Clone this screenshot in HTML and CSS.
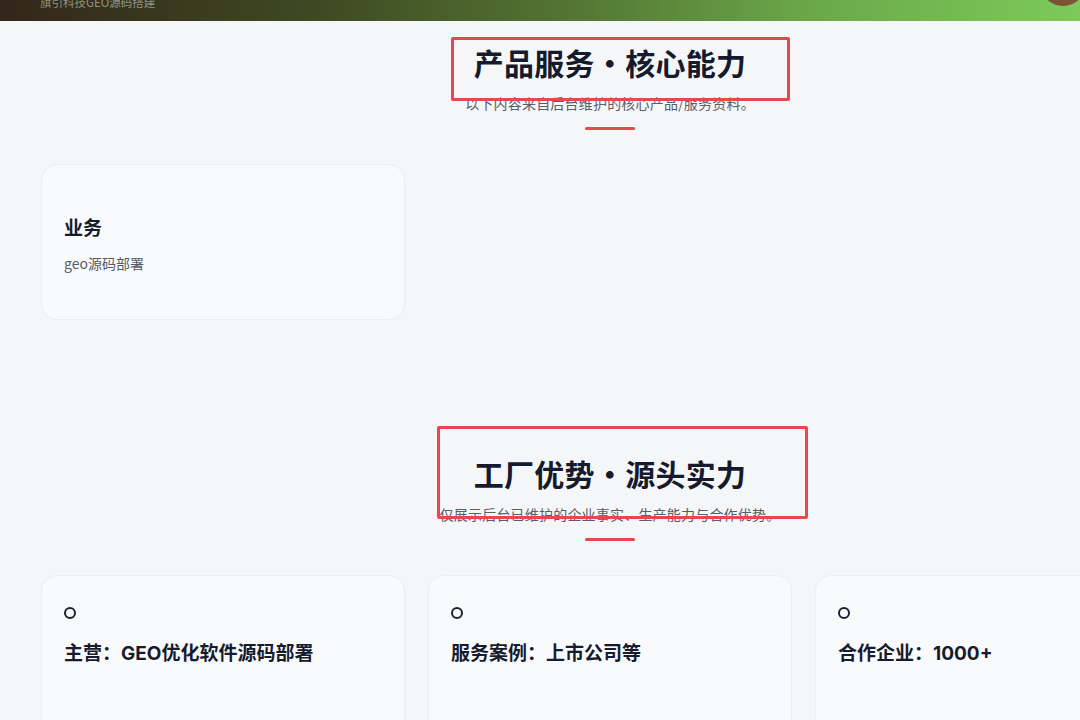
FILE: index.html
```html
<!DOCTYPE html>
<html lang="zh-CN">
<head>
<meta charset="utf-8">
<title>旗引科技GEO源码搭建</title>
<link rel="stylesheet" href="styles.css">
</head>
<body>
<header class="topbar">
  <div class="brand">旗引科技GEO源码搭建</div>
  <span class="avatar"></span>
</header>

<main class="page">
  <section class="section section-products">
    <h2 class="section-title">产品服务・核心能力</h2>
    <p class="section-sub">以下内容来自后台维护的核心产品/服务资料。</p>
    <span class="section-bar"></span>
    <div class="grid">
      <article class="card card-plain">
        <h3 class="card-title">业务</h3>
        <p class="card-text">geo源码部署</p>
      </article>
    </div>
  </section>

  <section class="section section-factory">
    <h2 class="section-title">工厂优势・源头实力</h2>
    <p class="section-sub">仅展示后台已维护的企业事实、生产能力与合作优势。</p>
    <span class="section-bar"></span>
    <div class="grid">
      <article class="card card-icon">
        <span class="dot"></span>
        <h3 class="card-title">主营：GEO优化软件源码部署</h3>
      </article>
      <article class="card card-icon">
        <span class="dot"></span>
        <h3 class="card-title">服务案例：上市公司等</h3>
      </article>
      <article class="card card-icon">
        <span class="dot"></span>
        <h3 class="card-title">合作企业：1000+</h3>
      </article>
    </div>
  </section>
</main>

<span class="mark mark-one"></span>
<span class="mark mark-two"></span>
</body>
</html>
```

FILE: styles.css
```css
* { box-sizing: border-box; }

html, body {
  margin: 0;
  padding: 0;
}

body {
  background: #f5f6f7;
  font-family: "Noto Sans CJK SC", sans-serif;
  color: #161b2e;
  width: 1080px;
  height: 720px;
  overflow: hidden;
  position: relative;
}

/* top navigation strip (scrolled so only its lower edge shows) */
.topbar {
  height: 21px;
  background: linear-gradient(90deg, #33261a 0%, #3f4a22 30%, #557a35 55%, #6aa84a 75%, #7cca5a 100%);
  overflow: hidden;
  position: relative;
}

.brand {
  margin: -7px 0 0 40px;
  font-size: 11.5px;
  line-height: 18px;
  color: #8f9383;
}

.avatar {
  position: absolute;
  right: -6px;
  top: -40px;
  width: 46px;
  height: 46px;
  border-radius: 50%;
  background: #7c5434;
}

.page {
  width: 1138px;
  margin-left: 41px;
}

.section {
  display: flex;
  flex-direction: column;
  align-items: center;
}

.section-products { padding-top: 22px; }
.section-factory { padding-top: 134px; }

.section-title {
  margin: 0;
  font-family: "Noto Sans CJK SC", sans-serif;
  font-size: 30px;
  line-height: 39px;
  font-weight: 700;
  color: #151a2c;
  letter-spacing: 0.3px;
}

.section-sub {
  margin: 10px 0 0;
  font-family: "Noto Sans CJK SC", sans-serif;
  font-size: 14px;
  line-height: 22px;
  letter-spacing: 0.2px;
  color: #585d69;
}

.section-bar {
  display: block;
  width: 50px;
  height: 3px;
  border-radius: 2px;
  background: #e5484d;
  margin-top: 13px;
}

.grid {
  align-self: stretch;
  display: grid;
  grid-template-columns: repeat(3, 1fr);
  gap: 23px;
  margin-top: 34px;
}

.card {
  background: #f8fafc;
  border: 1px solid #eceef1;
  border-radius: 16px;
}

.card-plain {
  padding: 51px 22px 45px;
}

.card-icon {
  padding: 31px 22px 60px;
  min-height: 170px;
}

.dot {
  display: block;
  width: 12px;
  height: 12px;
  border: 2px solid #1b2033;
  border-radius: 50%;
}

.card-title {
  margin: 0;
  font-family: "Inter", "Noto Sans CJK SC", sans-serif;
  font-size: 19px;
  line-height: 26px;
  font-weight: 700;
  color: #161b2e;
}

.card-icon .card-title { margin-top: 22px; }

.card-text {
  margin: 10px 0 0;
  font-family: "Noto Sans CJK SC", sans-serif;
  font-size: 14px;
  line-height: 22px;
  color: #555a66;
}

/* red highlight frames over the section headings */
.mark {
  position: absolute;
  border: 3px solid #e6484e;
  border-radius: 2px;
  pointer-events: none;
}

.mark-one { left: 451px; top: 37px; width: 339px; height: 64px; }
.mark-two { left: 437px; top: 426px; width: 371px; height: 93px; }
```
